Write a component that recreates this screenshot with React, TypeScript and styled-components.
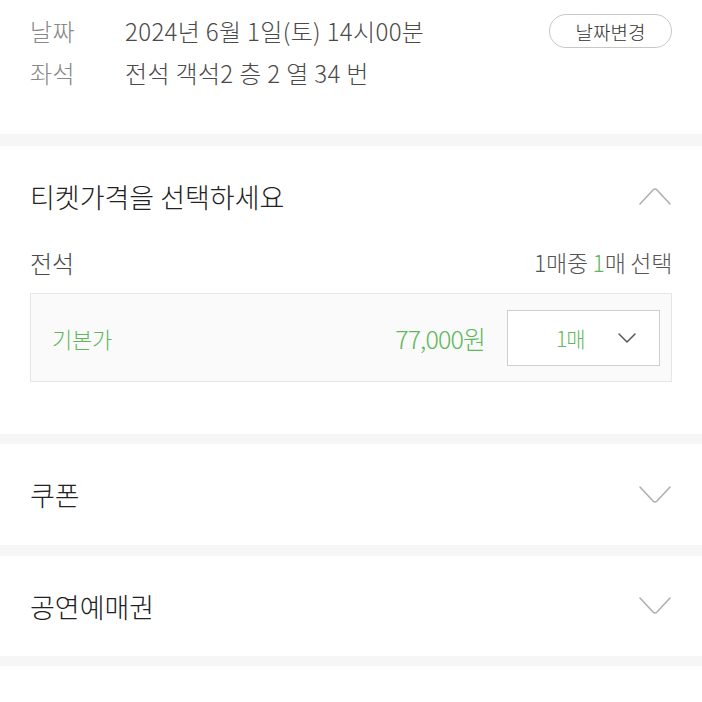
import React from 'react';
import styled, { createGlobalStyle } from 'styled-components';

const GlobalStyle = createGlobalStyle`
  html, body {
    margin: 0;
    padding: 0;
    background: #ffffff;
  }
  body {
    font-family: 'Noto Sans CJK KR', 'Noto Sans', sans-serif;
    font-weight: 300;
    color: #333;
  }
`;

const GREEN = '#5fb85c';

const Page = styled.div`
  width: 702px;
`;

const Divider = styled.div<{ h: number }>`
  height: ${(p) => p.h}px;
  background: #f6f6f6;
`;

const InfoSection = styled.section`
  height: 134px;
  padding: 13px 30px 0;
  box-sizing: border-box;
`;

const InfoRow = styled.div`
  display: flex;
  align-items: center;
  height: 34px;
  margin-bottom: 8px;
  font-size: 24px;
  letter-spacing: 0.35px;
`;

const InfoLabel = styled.span`
  width: 95px;
  color: #888;
`;

const InfoValue = styled.span`
  flex: 1;
  color: #4a4a4a;
`;

const PillButton = styled.button`
  height: 34px;
  width: 123px;
  margin-top: 2px;
  border: 1px solid #c8c8c8;
  border-radius: 17px;
  background: #fff;
  font-family: inherit;
  font-weight: 300;
  font-size: 19px;
  color: #333;
  padding: 0;
`;

const Section = styled.section<{ h?: number }>`
  padding: 0 30px;
  ${(p) => (p.h ? `height: ${p.h}px;` : '')}
  display: flex;
  flex-direction: column;
`;

const SectionHeader = styled.div<{ h: number }>`
  height: ${(p) => p.h}px;
  display: flex;
  align-items: center;
  justify-content: space-between;
`;

const SectionTitle = styled.h2`
  margin: 0;
  font-size: 27px;
  font-weight: 300;
  color: #222;
  letter-spacing: 0;
`;

const GradeRow = styled.div`
  height: 32px;
  display: flex;
  align-items: center;
  justify-content: space-between;
  font-size: 24px;
  color: #4a4a4a;
`;

const Count = styled.span`
  color: #555;
  font-size: 23px;
  letter-spacing: -0.3px;
`;

const Green = styled.span`
  color: ${GREEN};
`;

const PriceBox = styled.div`
  margin-top: 15px;
  height: 89px;
  box-sizing: border-box;
  border: 1px solid #e6e6e6;
  background: #fafafa;
  display: flex;
  align-items: center;
  padding: 0 11px 0 21px;
`;

const PriceName = styled.span`
  flex: 1;
  color: ${GREEN};
  font-size: 22px;
  letter-spacing: -0.2px;
`;

const PriceValue = styled.span`
  color: ${GREEN};
  font-size: 25px;
  letter-spacing: -0.9px;
  margin-right: 22px;
`;

const QtySelect = styled.div`
  width: 153px;
  height: 56px;
  box-sizing: border-box;
  border: 1px solid #cfcfcf;
  background: #fff;
  display: flex;
  align-items: center;
  padding: 0 23px 0 48px;
  justify-content: space-between;
  color: ${GREEN};
  font-size: 21px;
  letter-spacing: -1px;
`;

const Chevron: React.FC<{ up?: boolean }> = ({ up }) => (
  <svg width={34} height={20} viewBox="0 0 34 20" fill="none">
    <path
      d={up ? 'M2 18 L15 4 Q17 2 19 4 L32 18' : 'M2 2 L15 16 Q17 18 19 16 L32 2'}
      stroke="#b0b0b0"
      strokeWidth="1.6"
      strokeLinecap="round"
      strokeLinejoin="round"
    />
  </svg>
);

const SmallChevron = () => (
  <svg width="18" height="10" viewBox="0 0 18 10" fill="none">
    <path d="M1 1 L9 9 L17 1" stroke="#555" strokeWidth="1.5" strokeLinecap="round" strokeLinejoin="round" />
  </svg>
);

export default function App() {
  return (
    <Page>
      <GlobalStyle />
      <InfoSection>
        <InfoRow>
          <InfoLabel>날짜</InfoLabel>
          <InfoValue>2024년 6월 1일(토) 14시00분</InfoValue>
          <PillButton>날짜변경</PillButton>
        </InfoRow>
        <InfoRow>
          <InfoLabel>좌석</InfoLabel>
          <InfoValue>전석 객석2 층 2 열 34 번</InfoValue>
        </InfoRow>
      </InfoSection>
      <Divider h={12} />
      <Section h={288}>
        <SectionHeader h={100}>
          <SectionTitle>티켓가격을 선택하세요</SectionTitle>
          <Chevron up />
        </SectionHeader>
        <GradeRow>
          <span>전석</span>
          <Count>
            1매중 <Green>1</Green>매 선택
          </Count>
        </GradeRow>
        <PriceBox>
          <PriceName>기본가</PriceName>
          <PriceValue>77,000원</PriceValue>
          <QtySelect>
            <span>1매</span>
            <SmallChevron />
          </QtySelect>
        </PriceBox>
      </Section>
      <Divider h={10} />
      <Section>
        <SectionHeader h={101}>
          <SectionTitle>쿠폰</SectionTitle>
          <Chevron />
        </SectionHeader>
      </Section>
      <Divider h={11} />
      <Section>
        <SectionHeader h={100}>
          <SectionTitle>공연예매권</SectionTitle>
          <Chevron />
        </SectionHeader>
      </Section>
      <Divider h={10} />
    </Page>
  );
}
